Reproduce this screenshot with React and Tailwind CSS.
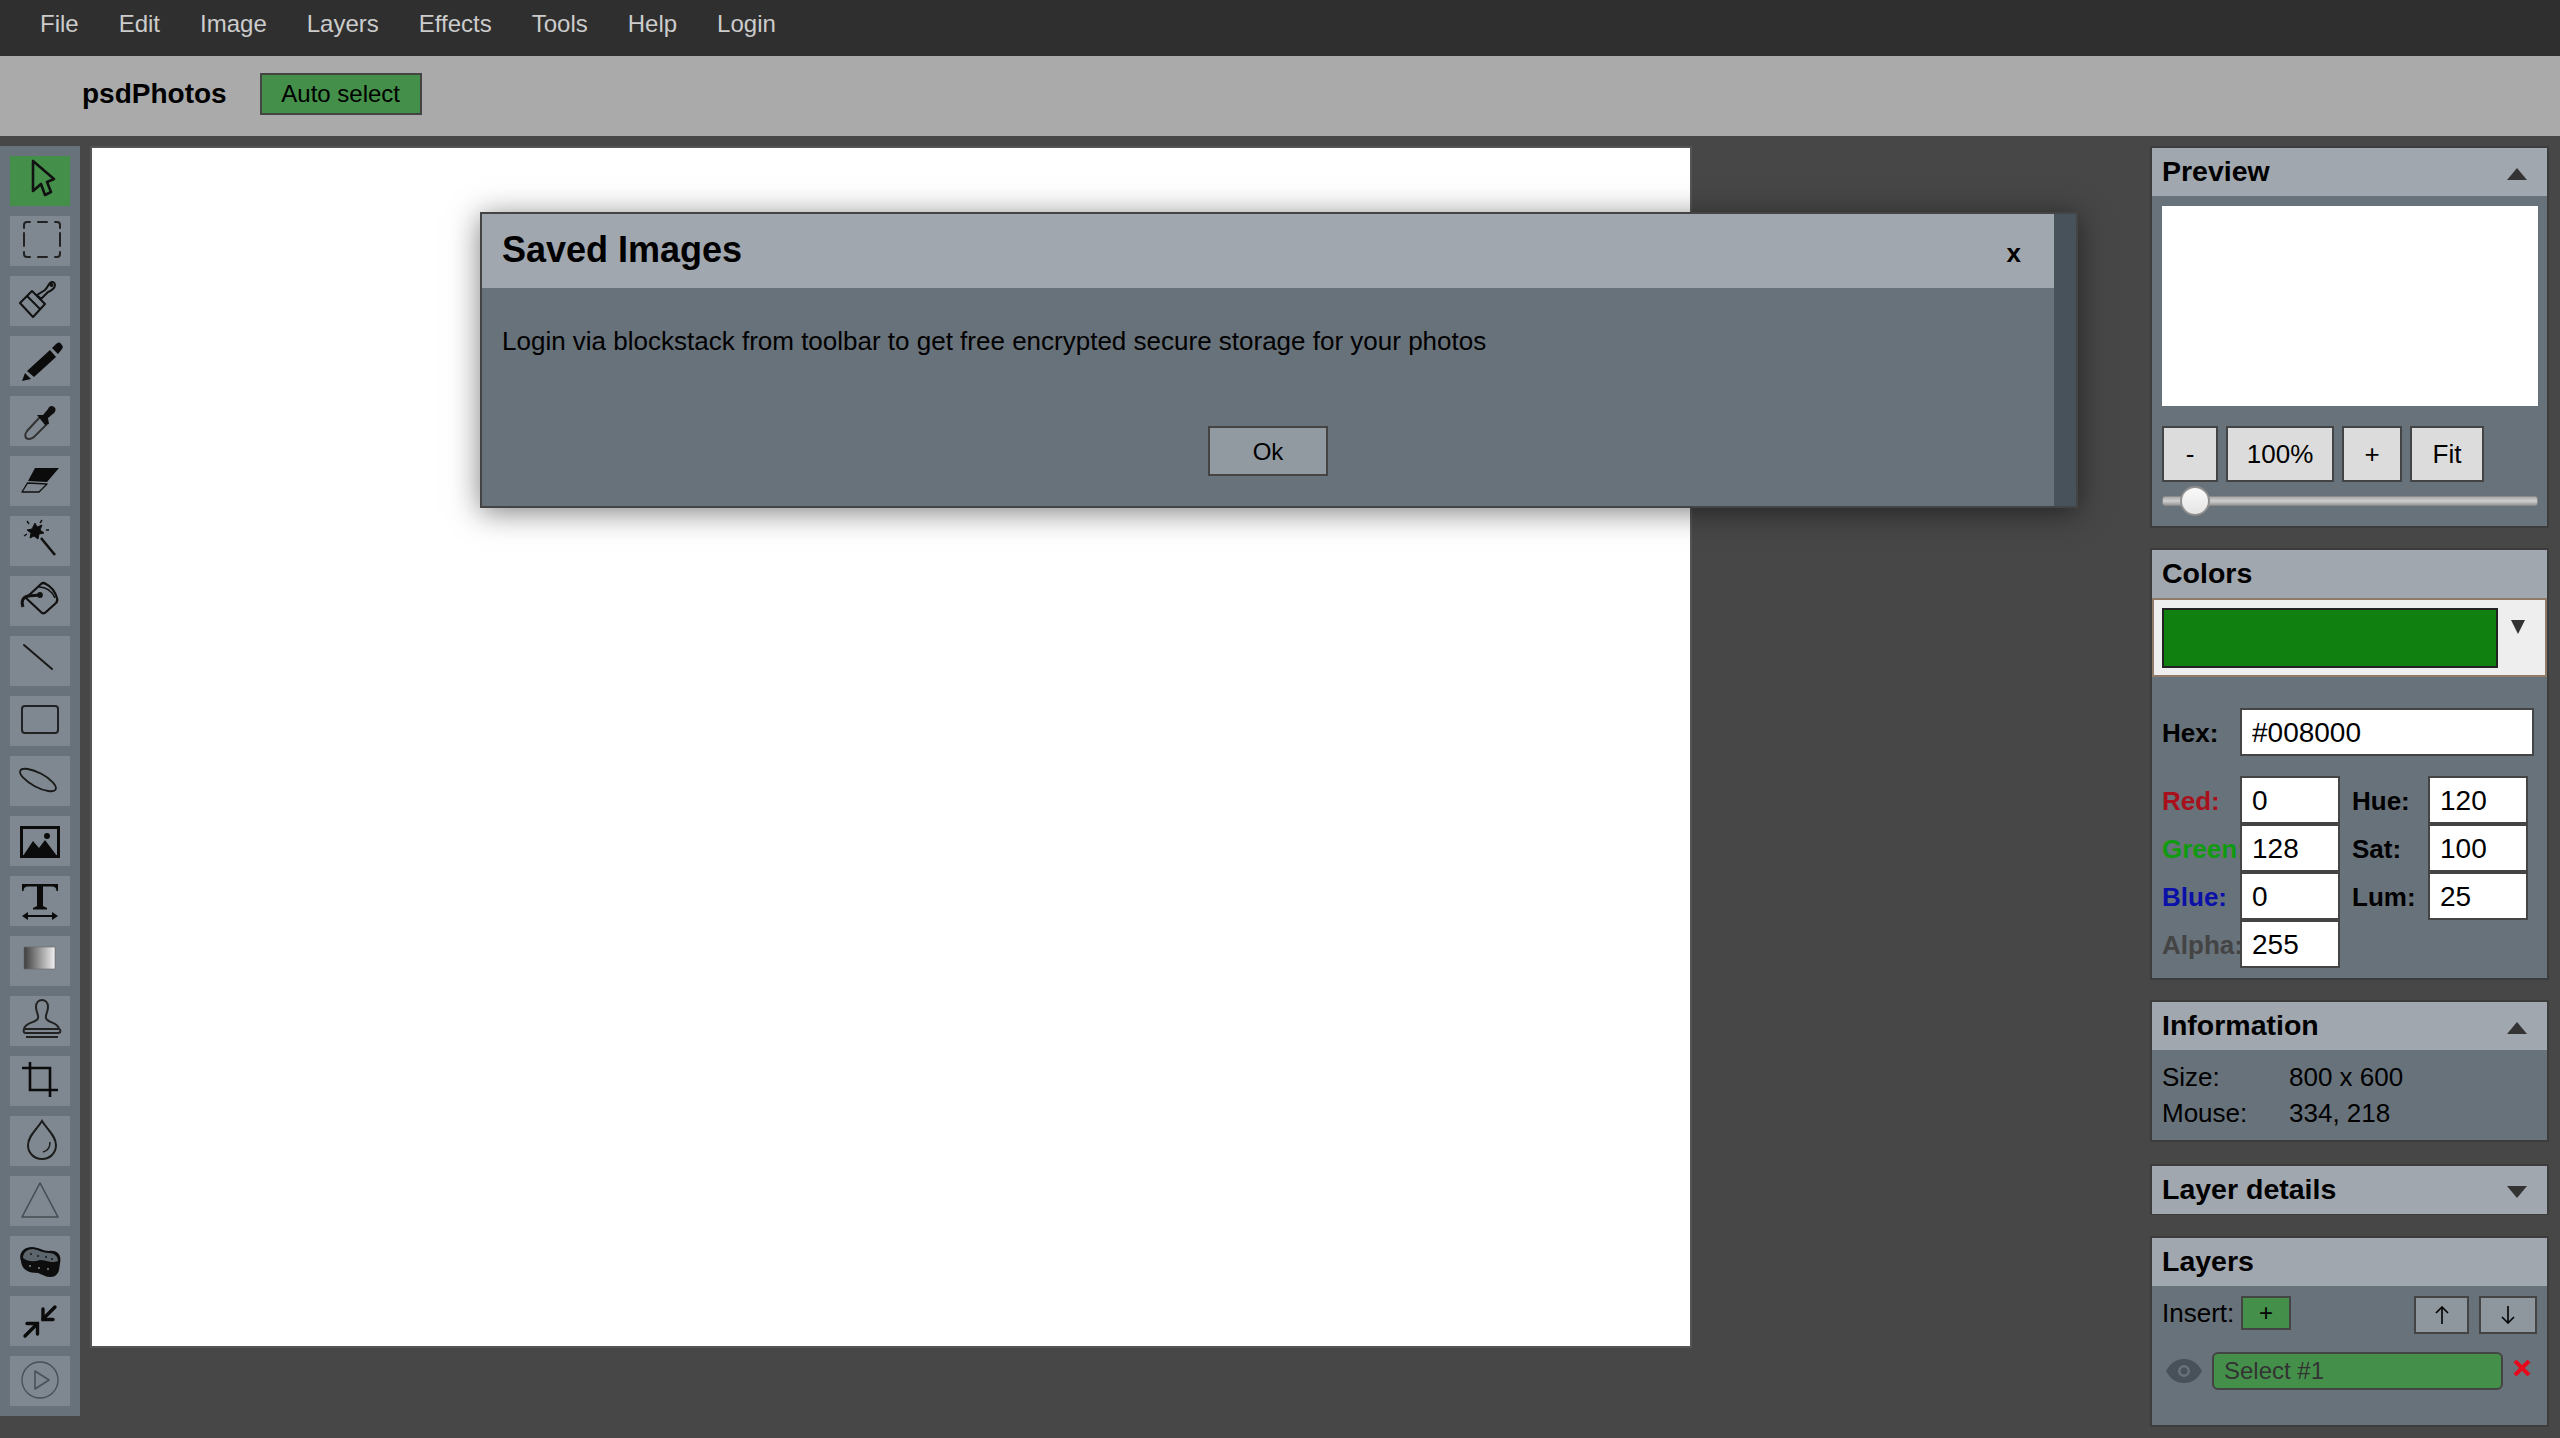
const menuItems = ["File", "Edit", "Image", "Layers", "Effects", "Tools", "Help", "Login"]

// tool icons, drawn in the 60x50 box of a tool button
const tools = [
  <path d="M23 5V35L31 28L35 39L41 36L37 26L44 23Z" fill="none" stroke="#111" strokeWidth="2.6" strokeLinejoin="round" />,
  <path
    d="M14 12V9Q14 6 17 6H20M28 6H37M45 6H47Q50 6 50 9V12M50 17V30M50 36V38Q50 41 47 41H45M37 41H28M20 41H17Q14 41 14 38V36M14 30V17"
    fill="none"
    stroke="#222"
    strokeWidth="2"
    strokeLinecap="round"
  />,
  <g fill="none" stroke="#111" strokeWidth="2" strokeLinejoin="round">
    <path d="M10 27L22 15L35 28L23 41Z" />
    <path d="M17 20L30 33" />
    <path d="M27 19L31 23L38 16C41 15 45 12 45 9C45 6 42 5 40 7C38 9 38 11 35 14Z" />
    <circle cx="41.5" cy="9" r="1" />
  </g>,
  <g fill="#0b0b0b">
    <path d="M17 35L40 14L46 21L24 41Z" />
    <path d="M42 12L46 8C48 6 50 6 51 8L52 9C53 10 53 12 52 13L48 18Z" />
    <path d="M15 37L21 43L12 45Z" />
  </g>,
  <g>
    <path d="M30 21L17 35C14 39 15 43 19 43C21 43 22 42 24 41L37 28" fill="none" stroke="#333" strokeWidth="2" />
    <path d="M27 19L33 19L38 13C39 10 42 9 44 11C46 12 46 15 44 17L38 22L39 28L35 29Z" fill="#0e0e0e" />
  </g>,
  <g>
    <path d="M25 12H49L37 26L18 25Z" fill="#0b0b0b" />
    <path d="M17.5 27L37 28L29 36H12Z" fill="none" stroke="#111" strokeWidth="1.4" strokeLinejoin="round" />
  </g>,
  <g stroke="#111" fill="none">
    <path d="M25 7L27 11L32 9L30 14L34 17L29 18L28 23L24 20L20 22L21 17L17 14L22 13Z" fill="#0b0b0b" strokeWidth="1" />
    <path d="M31 22L45 39" strokeWidth="2.6" />
    <path d="M17 5L19 8M32 4L30 7M14 20L17 18M36 14L39 14" strokeWidth="1.4" />
  </g>,
  <g fill="none" stroke="#111" strokeWidth="2.2" strokeLinejoin="round">
    <path d="M16 22L32 37Q34 38 36 36L46 27Q48 25 47 22Q44 12 36 8Q33 6 31 8Z" />
    <path d="M29 11Q40 11 45 22" strokeWidth="1.5" />
    <path d="M13 31Q10 22 18 20L30 19" strokeWidth="3" />
    <circle cx="30" cy="19" r="1.8" fill="#111" />
  </g>,
  <path d="M14 9L42 33" stroke="#1a1a1a" strokeWidth="2" strokeLinecap="round" />,
  <rect x="12" y="10" width="36" height="27" rx="3" fill="none" stroke="#222" strokeWidth="2" />,
  <ellipse cx="28" cy="24" rx="20" ry="7" transform="rotate(28 28 24)" fill="none" stroke="#1a1a1a" strokeWidth="1.8" />,
  <g>
    <rect x="11.5" y="11.5" width="37" height="29" fill="none" stroke="#0b0b0b" strokeWidth="3" />
    <path d="M13 40L23 25L29 32L35 24L47 40Z" fill="#0b0b0b" />
    <circle cx="37" cy="20" r="3" fill="#0b0b0b" />
  </g>,
  <g fill="#0b0b0b" stroke="none">
    <path d="M12 8H48V15H46.5C46.5 12 45 10.5 42 10.5H33V30L37 32V33.5H23V32L27 30V10.5H18C15 10.5 13.5 12 13.5 15H12Z" />
    <rect x="15" y="39" width="30" height="2" />
    <path d="M12 40L18 36V44Z" />
    <path d="M48 40L42 36V44Z" />
  </g>,
  <g>
    <defs>
      <linearGradient id="toolGradient">
        <stop offset="0" stopColor="#3e3e3e" />
        <stop offset="1" stopColor="#f0f0f0" />
      </linearGradient>
    </defs>
    <rect x="14" y="11" width="31" height="22" fill="url(#toolGradient)" stroke="#666" strokeWidth="0.6" />
  </g>,
  <g fill="none" stroke="#222" strokeWidth="2" strokeLinejoin="round">
    <path d="M28 22C29 19 26 16 26 11C26 6 29 4 32 4C35 4 38 6 38 11C38 16 35 19 36 22C37 27 48 26 49 33H14C15 26 27 27 28 22Z" />
    <path d="M14 33C13 36 14 37 16 37H48C50 37 51 36 50 33" />
    <path d="M16 41H48" />
  </g>,
  <g fill="none" stroke="#0b0b0b" strokeWidth="2.6">
    <path d="M20 6V34H48" />
    <path d="M12 12H40V41" />
  </g>,
  <g fill="none" stroke="#1c1c1c" strokeWidth="2">
    <path d="M32 5C27 13 18 20 18 29C18 37 24 43 32 43C40 43 46 37 46 29C46 20 37 13 32 5Z" />
    <path d="M40 26C40 31 38 35 33 36" strokeWidth="1.5" />
  </g>,
  <path d="M30 7L48 41H12Z" fill="none" stroke="#454c52" strokeWidth="1.6" strokeLinejoin="round" />,
  <g>
    <path d="M11 25C8 17 14 11 22 11C28 11 33 15 39 15C47 14 52 19 50 27C49 33 50 36 45 40C39 43 33 39 28 37C20 37 12 35 11 25Z" fill="#0d0d0d" />
    <path d="M13 22C13 16 18 13 23 13C29 14 33 17 39 17C44 17 48 20 48 25C42 28 36 24 30 24C24 26 18 26 13 22Z" fill="#5d656c" />
    <g fill="#15181b">
      <circle cx="21" cy="18" r="1" />
      <circle cx="28" cy="20" r="1" />
      <circle cx="36" cy="21" r="1" />
      <circle cx="42" cy="23" r="1" />
    </g>
    <g fill="#8a9299">
      <circle cx="20" cy="30" r="0.9" />
      <circle cx="29" cy="32" r="0.9" />
      <circle cx="38" cy="33" r="0.9" />
    </g>
  </g>,
  <g fill="none" stroke="#0b0b0b" strokeWidth="3.4" strokeLinecap="round">
    <path d="M45 11L33 23" />
    <path d="M33 13V23.5H43" />
    <path d="M15 40L27 28" />
    <path d="M17 27.5H27.5V38" />
  </g>,
  <g fill="none" stroke="#4a5057" strokeWidth="1.4" strokeLinejoin="round">
    <circle cx="30" cy="24" r="18" />
    <path d="M25 15V33L39 24Z" strokeWidth="1.6" />
  </g>
]

const PanelTitle = ({ title, arrow }) => (
  <div className="flex h-[48px] shrink-0 items-center justify-between bg-[#a1a7ae] pl-[10px] pr-[20px]">
    <span className="-translate-y-[1px] text-[28.5px] font-bold leading-none text-black">{title}</span>
    {arrow === "up" && (
      <svg width="20" height="12" viewBox="0 0 20 12" className="mt-[4px]">
        <path d="M10 0L20 12H0Z" fill="#333" />
      </svg>
    )}
    {arrow === "down" && (
      <svg width="20" height="12" viewBox="0 0 20 12" className="mt-[4px]">
        <path d="M0 0H20L10 12Z" fill="#333" />
      </svg>
    )}
  </div>
)

const ZoomButton = ({ children, className }) => (
  <button className={`h-[56px] border-2 border-[#444] bg-[#dcdcdc] text-[26px] leading-none text-black ${className}`}>
    {children}
  </button>
)

const ColorRow = ({ label, color, value, right, rightValue }) => (
  <div className="flex h-[48px] items-center">
    <span className={`mt-[1px] w-[78px] shrink-0 whitespace-nowrap text-[26px] font-bold leading-none ${color}`}>
      {label}
    </span>
    <input
      readOnly
      value={value}
      className="relative h-[48px] w-[100px] shrink-0 border-2 border-[#444] bg-white px-[10px] pt-[2px] text-[28px] text-black outline-none"
    />
    {right && (
      <>
        <span className="ml-[12px] mt-[1px] w-[76px] shrink-0 text-[26px] font-bold leading-none text-black">{right}</span>
        <input
          readOnly
          value={rightValue}
          className="h-[48px] w-[100px] shrink-0 border-2 border-[#444] bg-white px-[10px] pt-[2px] text-[28px] text-black outline-none"
        />
      </>
    )}
  </div>
)

export default function App() {
  return (
    <div className="relative flex h-[1438px] w-[2560px] flex-col overflow-hidden bg-[#474747] font-['Liberation_Sans',Arial,sans-serif]">
      {/* Menu */}
      <div className="flex h-[56px] shrink-0 items-center bg-[#2f2f2f] pb-[9px] pl-[20px]">
        {menuItems.map(item => (
          <span key={item} className="px-[20px] text-[24px] leading-none text-[#cccccc]">
            {item}
          </span>
        ))}
      </div>

      {/* Top options */}
      <div className="flex h-[80px] shrink-0 items-center bg-[#aaaaaa] pb-[4px] pl-[82px]">
        <span className="text-[28px] font-bold leading-none text-black">psdPhotos</span>
        <button className="ml-[33px] h-[42px] w-[162px] border-2 border-[#444] bg-[#44904a] text-[24px] leading-none text-black">
          Auto select
        </button>
      </div>

      <div className="flex min-h-0 flex-1">
        {/* Tools */}
        <div className="mt-[10px] flex h-[1270px] w-[80px] shrink-0 flex-col gap-[10px] bg-[#68727a] p-[10px]">
          {tools.map((icon, i) => (
            <div key={i} className={`h-[50px] w-[60px] shrink-0 ${i === 0 ? "bg-[#44904a]" : "bg-[#7f8890]"}`}>
              <svg width="60" height="50" viewBox="0 0 60 50">
                {icon}
              </svg>
            </div>
          ))}
        </div>

        {/* Canvas */}
        <div className="ml-[10px] mt-[10px] h-[1202px] w-[1602px] shrink-0 border-2 border-[#555] bg-white" />

        {/* Right column */}
        <div className="ml-auto mr-[11px] mt-[10px] flex w-[399px] shrink-0 flex-col">
          <div className="flex h-[382px] flex-col border-2 border-[#3c3c3c] bg-[#68727a]">
            <PanelTitle title="Preview" arrow="up" />
            <div className="px-[10px] pt-[10px]">
              <div className="h-[200px] w-[376px] bg-white" />
              <div className="mt-[20px] flex gap-[8px]">
                <ZoomButton className="w-[56px]">-</ZoomButton>
                <ZoomButton className="w-[108px]">100%</ZoomButton>
                <ZoomButton className="w-[60px]">+</ZoomButton>
                <ZoomButton className="w-[74px]">Fit</ZoomButton>
              </div>
              <div className="relative mt-[14px] h-[10px] w-[376px] rounded-[3px] border border-[#8a8a8a] bg-[linear-gradient(#aaa,#cfcfcf_50%,#999)]">
                <div className="absolute -top-[11px] left-[17px] h-[30px] w-[30px] rounded-full border-2 border-[#8e8e8e] bg-[linear-gradient(#fafafa,#e4e4e4)]" />
              </div>
            </div>
          </div>

          <div className="mt-[20px] flex h-[432px] flex-col border-2 border-[#3c3c3c] bg-[#68727a]">
            <PanelTitle title="Colors" />
            <div className="flex h-[79px] shrink-0 border-2 border-[#8f7b68] bg-[#eeeeee] pl-[8px] pt-[8px]">
              <div className="h-[60px] w-[336px] border-2 border-[#222] bg-[#108010]" />
              <svg width="14" height="14" viewBox="0 0 14 14" className="ml-[13px] mt-[12px]">
                <path d="M0 0H14L7 14Z" fill="#333" />
              </svg>
            </div>
            <div className="px-[10px]">
              <div className="mt-[31px] flex h-[48px] items-center">
                <span className="mt-[1px] w-[78px] shrink-0 text-[26px] font-bold leading-none text-black">Hex:</span>
                <input
                  readOnly
                  value="#008000"
                  className="h-[48px] w-[294px] border-2 border-[#444] bg-white px-[10px] pt-[2px] text-[28px] text-black outline-none"
                />
              </div>
              <div className="mt-[20px]">
                <ColorRow label="Red:" color="text-[#a8111c]" value="0" right="Hue:" rightValue="120" />
                <ColorRow label="Green:" color="text-[#109a10]" value="128" right="Sat:" rightValue="100" />
                <ColorRow label="Blue:" color="text-[#0a10a8]" value="0" right="Lum:" rightValue="25" />
                <ColorRow label="Alpha:" color="text-[#444]" value="255" />
              </div>
            </div>
          </div>

          <div className="mt-[20px] flex h-[142px] flex-col border-2 border-[#3c3c3c] bg-[#68727a]">
            <PanelTitle title="Information" arrow="up" />
            <div className="pl-[10px] pt-[9px] text-[26px] leading-[36px] text-black">
              <div className="flex">
                <span className="w-[127px]">Size:</span>
                <span>800 x 600</span>
              </div>
              <div className="flex">
                <span className="w-[127px]">Mouse:</span>
                <span>334, 218</span>
              </div>
            </div>
          </div>

          <div className="mt-[22px] flex h-[51px] flex-col border-2 border-[#3c3c3c] bg-[#68727a]">
            <PanelTitle title="Layer details" arrow="down" />
          </div>

          <div className="mt-[21px] flex h-[191px] flex-col border-2 border-[#3c3c3c] bg-[#68727a]">
            <PanelTitle title="Layers" />
            <div className="px-[10px] pt-[10px]">
              <div className="flex items-start">
                <span className="w-[80px] text-[26px] leading-[34px] text-black">Insert:</span>
                <button className="flex h-[34px] w-[50px] items-center justify-center border-2 border-[#444] bg-[#44904a] text-[24px] leading-none text-black">
                  +
                </button>
                <button className="ml-[123px] flex h-[38px] w-[56px] items-center justify-center border-2 border-[#444] bg-[#8f979e]">
                  <svg width="14" height="18" viewBox="0 0 14 18" fill="none" stroke="#000" strokeWidth="1.6">
                    <path d="M7 18V1M1 7L7 1L13 7" />
                  </svg>
                </button>
                <button className="ml-[10px] flex h-[38px] w-[58px] items-center justify-center border-2 border-[#444] bg-[#8f979e]">
                  <svg width="14" height="18" viewBox="0 0 14 18" fill="none" stroke="#000" strokeWidth="1.6">
                    <path d="M7 0V17M1 11L7 17L13 11" />
                  </svg>
                </button>
              </div>
              <div className="mt-[18px] flex items-center">
                <svg width="36" height="24" viewBox="0 0 36 24" className="ml-[4px] shrink-0">
                  <path
                    fillRule="evenodd"
                    d="M0 12C5 3 11 0 18 0C25 0 31 3 36 12C31 21 25 24 18 24C11 24 5 21 0 12ZM18 6A6 6 0 1 0 18 18A6 6 0 1 0 18 6Z"
                    fill="#48505a"
                  />
                  <circle cx="18" cy="12" r="3.5" fill="#48505a" />
                </svg>
                <div className="ml-[10px] flex h-[38px] w-[291px] shrink-0 items-center rounded-[6px] border-2 border-[#444] bg-[#44904a] pl-[10px] text-[24px] leading-none text-[#333]">
                  Select #1
                </div>
                <svg width="18" height="16" viewBox="0 0 18 16" className="mb-[6px] ml-[10px] shrink-0">
                  <path d="M2 1L16 15M16 1L2 15" stroke="#e8081c" strokeWidth="4" />
                </svg>
              </div>
            </div>
          </div>
        </div>
      </div>

      {/* Dialog */}
      <div className="absolute left-[480px] top-[212px] flex h-[296px] w-[1598px] border-2 border-[#444] bg-[#48525b] shadow-[0_4px_28px_rgba(0,0,0,0.5)]">
        <div className="flex h-full w-[1572px] shrink-0 flex-col bg-[#68727a]">
          <div className="flex h-[74px] shrink-0 items-center justify-between bg-[#a1a7ae] pl-[20px] pr-[33px]">
            <span className="-translate-y-[1px] text-[36px] font-bold leading-none text-black">Saved Images</span>
            <span className="mt-[4px] text-[26px] font-bold leading-none text-black">x</span>
          </div>
          <div className="pl-[20px] pt-[38px] text-[26px] leading-[30px] text-black">
            Login via blockstack from toolbar to get free encrypted secure storage for your photos
          </div>
          <div className="mt-[70px] flex justify-center">
            <button className="h-[50px] w-[120px] border-2 border-[#444] bg-[#929aa1] pt-[2px] text-[24px] leading-none text-black">
              Ok
            </button>
          </div>
        </div>
      </div>
    </div>
  )
}
